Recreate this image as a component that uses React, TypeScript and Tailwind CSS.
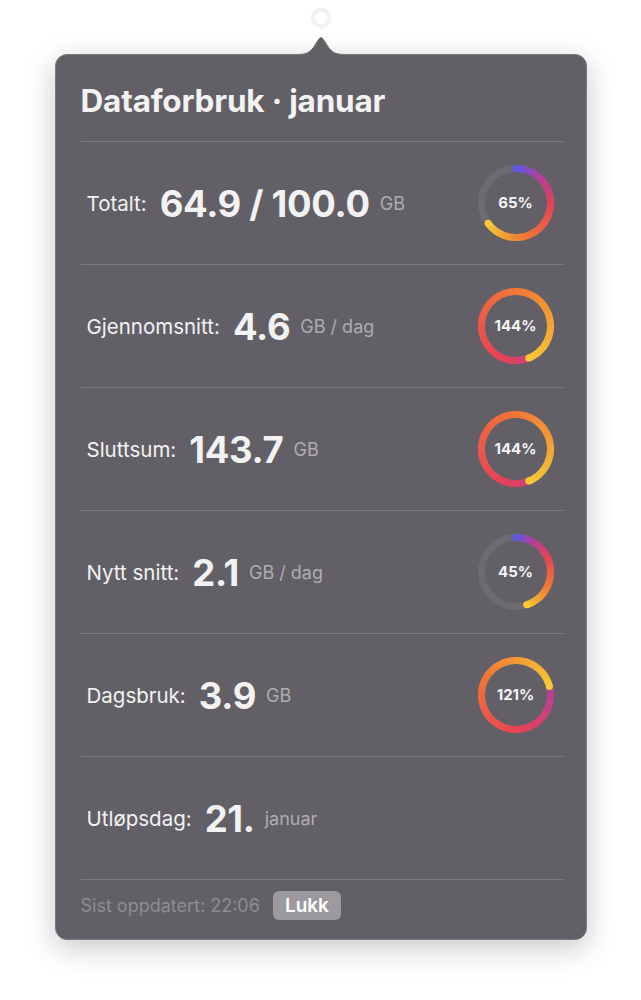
import React from "react";

type Row = {
  label: string;
  value: string;
  unit: string;
  pct?: number;
};

const ROWS: Row[] = [
  { label: "Totalt:", value: "64.9 / 100.0", unit: "GB", pct: 65 },
  { label: "Gjennomsnitt:", value: "4.6", unit: "GB / dag", pct: 144 },
  { label: "Sluttsum:", value: "143.7", unit: "GB", pct: 144 },
  { label: "Nytt snitt:", value: "2.1", unit: "GB / dag", pct: 45 },
  { label: "Dagsbruk:", value: "3.9", unit: "GB", pct: 121 },
  { label: "Utløpsdag:", value: "21.", unit: "januar" },
];

const STOPS: [number, [number, number, number]][] = [
  [0, [92, 88, 232]],
  [0.18, [178, 64, 156]],
  [0.4, [234, 66, 86]],
  [0.7, [242, 120, 54]],
  [1, [248, 202, 52]],
];

function colorAt(t: number): string {
  const x = Math.min(1, Math.max(0, t));
  for (let i = 0; i < STOPS.length - 1; i++) {
    const [p0, c0] = STOPS[i];
    const [p1, c1] = STOPS[i + 1];
    if (x <= p1) {
      const k = (x - p0) / (p1 - p0);
      const c = c0.map((v, j) => Math.round(v + (c1[j] - v) * k));
      return `rgb(${c[0]},${c[1]},${c[2]})`;
    }
  }
  const c = STOPS[STOPS.length - 1][1];
  return `rgb(${c[0]},${c[1]},${c[2]})`;
}

function Ring({ pct }: { pct: number }) {
  const size = 78;
  const c = size / 2;
  const r = 34.5;
  const sw = 7;
  const total = pct / 100;
  const start = Math.max(0, total - 1);
  const pt = (f: number) => {
    const a = f * Math.PI * 2;
    return [c + r * Math.sin(a), c - r * Math.cos(a)];
  };
  const n = 140;
  const segs = [];
  for (let i = 0; i < n; i++) {
    const f0 = start + ((total - start) * i) / n;
    const f1 = start + ((total - start) * (i + 1)) / n + 0.002;
    const [x0, y0] = pt(f0);
    const [x1, y1] = pt(Math.min(f1, total));
    segs.push(
      <path
        key={i}
        d={`M${x0} ${y0} A${r} ${r} 0 0 1 ${x1} ${y1}`}
        stroke={colorAt((f0 + f1) / 2 / total)}
        strokeWidth={sw}
        fill="none"
      />,
    );
  }
  const [sx, sy] = pt(start);
  const [ex, ey] = pt(total);
  return (
    <div className="relative h-[78px] w-[78px] shrink-0">
      <svg width={size} height={size} viewBox={`0 0 ${size} ${size}`}>
        <circle cx={c} cy={c} r={r} stroke="rgba(255,255,255,0.07)" strokeWidth={sw} fill="none" />
        <circle cx={sx} cy={sy} r={sw / 2} fill={colorAt(start / total)} />
        {segs}
        <circle cx={ex} cy={ey} r={sw / 2} fill={colorAt(1)} />
      </svg>
      <span className="absolute inset-0 flex items-center justify-center text-[15px] font-bold text-[#f4f4f4]">
        {pct}%
      </span>
    </div>
  );
}

export default function App() {
  return (
    <div
      className="flex min-h-[1000px] w-full flex-col items-center bg-white"
      style={{ fontFamily: "Inter, 'Noto Sans', sans-serif" }}
    >
      {/* status item */}
      <div className="mt-[9px] h-[18px] w-[18px] rounded-full border-[3px] border-[#f3f3f3] shadow-[0_0_2px_rgba(0,0,0,0.25)]" />

      {/* arrow */}
      <svg width="50" height="19" viewBox="0 0 50 19" className="relative z-10 -mb-[1px] mt-[9px]">
        <path
          d="M0 18.5 C10 18.5 14 17 19 9 C22 4 23.5 1.5 25 1.5 C26.5 1.5 28 4 31 9 C36 17 40 18.5 50 18.5 L50 19 L0 19 Z"
          fill="#626066"
        />
        <path
          d="M0 18.5 C10 18.5 14 17 19 9 C22 4 23.5 1.5 25 1.5 C26.5 1.5 28 4 31 9 C36 17 40 18.5 50 18.5"
          fill="none"
          stroke="#7c7a7f"
          strokeWidth="1"
        />
      </svg>

      <div className="w-[532px] rounded-[12px] border border-[#7c7a7f] bg-[#626066] pl-[25px] pr-[23px] shadow-[0_8px_30px_rgba(0,0,0,0.22)]">
        <h1 className="border-b border-[#7e7c81] pb-[24px] pt-[30px] text-[31.5px] font-bold leading-[32px] tracking-[-0.2px] text-[#f2f2f2]">
          Dataforbruk · januar
        </h1>

        {ROWS.map((row) => (
          <div
            key={row.label}
            className="flex h-[123px] items-center justify-between border-b border-[#7e7c81] pl-[6px] pr-[8px]"
          >
            <div className="flex items-center pt-[2px]">
              <span className="text-[20.5px] leading-none text-[#f2f2f2]">{row.label}</span>
              <span className="ml-[13px] text-[36.5px] font-bold leading-none tracking-[-0.3px] text-[#f2f2f2]">
                {row.value}
              </span>
              <span className="ml-[10px] text-[18px] leading-none text-[#aeacb1]">{row.unit}</span>
            </div>
            {row.pct !== undefined && <Ring pct={row.pct} />}
          </div>
        ))}

        <div className="flex items-center gap-[13px] pb-[19px] pt-[11px]">
          <span className="text-[18px] text-[#8e8c91]">Sist oppdatert: 22:06</span>
          <button className="h-[29px] rounded-[6px] bg-[#9c9a9f] px-[12px] text-[19px] font-semibold leading-none text-white">
            Lukk
          </button>
        </div>
      </div>
    </div>
  );
}
